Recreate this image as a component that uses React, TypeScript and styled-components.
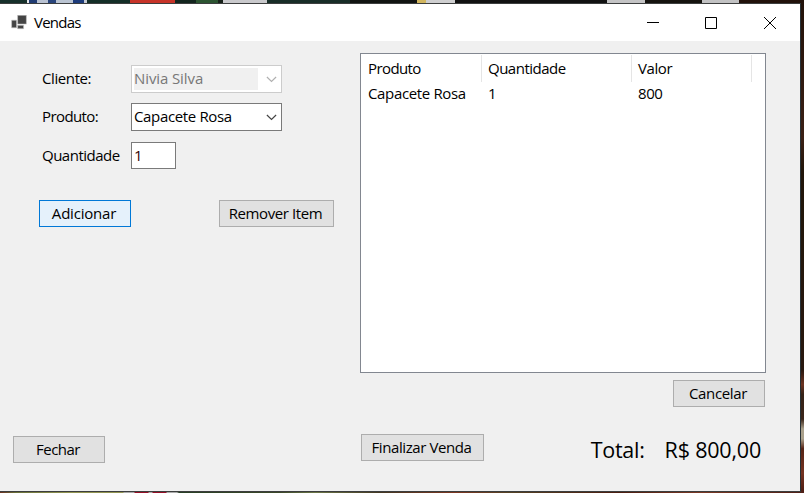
import React from "react";
import styled, { createGlobalStyle } from "styled-components";

const GlobalStyle = createGlobalStyle`
  * { box-sizing: border-box; }
  body { margin: 0; overflow: hidden; }
`;

const Desktop = styled.div`
  width: 804px;
  height: 493px;
  padding: 3px 3px 1px 0;
  overflow: hidden;
  font: 15px/20px "Open Sans", "Noto Sans", sans-serif;
  color: #000;
  white-space: nowrap;
  background:
    linear-gradient(90deg, #16302b 0 27px, #e6e6ea 27px 29px, #203b72 29px 37px, #b9c2d2 37px 48px, #29457c 48px 56px, #bac4d2 56px 73px, #1d3b7b 73px 84px, #c4c9d2 84px 87px, #142e28 87px 130px, #c73429 130px 175px, #12251e 175px 196px, #2c5431 196px 218px, #172019 218px 223px, #c9c9cc 223px 267px, #182d28 267px 350px, #111412 350px 417px, #d2b65f 417px 426px, #cfcfd0 426px 455px, #111 455px 607px, #c4c4c5 607px 645px, #15130f 645px 702px, #c2c2c3 702px 739px, #21110a 739px) 0 0 / 804px 3px no-repeat,
    linear-gradient(90deg, #6c3120, #697039 16px, #929452 70px, #929452 123px, #aaa 124px 134px, #940e25 135px 148px, #aaa 149px 152px, #940e25 153px 166px, #aaa 167px 177px, #283f25 179px, #3c4829 280px, #6b7546 315px, #443823 380px, #7c3520 455px, #554225 510px, #4b1d10 620px, #7a3824 700px, #4f2017) 0 491px / 804px 2px no-repeat,
    linear-gradient(#211109, #3b2015 28%, #201509 35%, #28180f 75%, #6c3321 78%, #352217 80%, #3b251a 85%, #aaa18c 87%, #aaa18c 89%, #562416 91%, #743321 96%, #4b1b11);
`;

const AppWindow = styled.main`
  width: 801px;
  height: 489px;
  border: solid #3c3e3e;
  border-width: 1px 1px 1px 0;
  border-right-color: #263036;
  background: #f0f0f0;
`;

const TitleBar = styled.header`
  display: flex;
  align-items: center;
  height: 37px;
  padding-left: 11px;
  background: #fff;
`;

const AppIcon = styled.svg`
  width: 16px;
  height: 16px;
  margin-right: 7px;
`;

const Label = styled.span<{ $track?: number }>`
  letter-spacing: ${(p) => p.$track ?? 0}px;
`;

const WindowTitle = styled(Label)`
  padding-bottom: 2px;
`;

const WindowControls = styled.div`
  display: flex;
  margin-left: auto;
`;

const ControlGlyph = styled.svg`
  width: 58px;
  height: 36px;
  fill: none;
  stroke: #000;
`;

const Body = styled.div`
  display: flex;
  height: 450px;
`;

const FormPanel = styled.section`
  display: flex;
  flex-direction: column;
  width: 360px;
  padding: 24px 26px 28px 13px;
`;

const Field = styled.div<{ $gap: number }>`
  display: grid;
  grid-template-columns: 89px auto;
  align-items: center;
  justify-content: start;
  margin-left: 29px;
  margin-bottom: ${(p) => p.$gap}px;

  > span {
    padding-bottom: 2px;
  }
`;

const Combo = styled.div<{ $disabled?: boolean }>`
  display: flex;
  align-items: center;
  width: 151px;
  height: 28px;
  padding: 2px;
  border: 1px solid ${(p) => (p.$disabled ? "#ccc" : "#7a7a7a")};
  background: #fff;
  color: ${(p) => (p.$disabled ? "#777" : "#000")};
`;

const ComboValue = styled.div<{ $disabled?: boolean }>`
  width: 124px;
  height: 22px;
  line-height: 20px;
  background: ${(p) => (p.$disabled ? "#f0f0f0" : "transparent")};
`;

const Chevron = styled.svg<{ $disabled?: boolean }>`
  width: 11px;
  height: 7px;
  margin-left: 8px;
  fill: none;
  stroke: ${(p) => (p.$disabled ? "#b0b0b0" : "#444")};
  stroke-width: 1.2;
`;

const QuantityBox = styled.div`
  width: 45px;
  height: 27px;
  padding: 2px;
  border: 1px solid #7a7a7a;
  background: #fff;
  color: #300;
  line-height: 20px;
`;

const FormActions = styled.div`
  display: flex;
  justify-content: space-between;
  margin-left: 26px;
`;

const Button = styled.button<{ $width?: number; $active?: boolean }>`
  display: flex;
  align-items: center;
  justify-content: center;
  width: ${(p) => p.$width ?? 92}px;
  height: 27px;
  padding: 0 2px 2px 0;
  border: 1px solid ${(p) => (p.$active ? "#0078d7" : "#adadad")};
  border-radius: 0;
  background: ${(p) => (p.$active ? "#e5f1fb" : "#e1e1e1")};
  color: #000;
  font: inherit;
`;

const FormFooter = styled.footer`
  margin-top: auto;
`;

const SalePanel = styled.section`
  display: flex;
  flex-direction: column;
  width: 406px;
  padding-top: 12px;
`;

const ListView = styled.div`
  height: 320px;
  padding: 1px 0 0 1px;
  border: 1px solid #828790;
  background: #fff;
`;

const ListRow = styled.div<{ $header?: boolean }>`
  display: grid;
  grid-template-columns: 120px 150px 120px;
  height: ${(p) => (p.$header ? 26 : 25)}px;
  line-height: ${(p) => (p.$header ? 27 : 25)}px;

  > span {
    padding-left: 6px;
    border-right: 1px solid ${(p) => (p.$header ? "#e5e5e5" : "transparent")};
  }
`;

const CancelRow = styled.div`
  display: flex;
  justify-content: flex-end;
  padding: 7px 1px 0 0;
`;

const Summary = styled.footer`
  display: flex;
  margin: 27px 0 0 1px;
`;

const Total = styled.div`
  display: flex;
  gap: 20px;
  margin-left: auto;
  padding: 2px 5px 0 0;
  font-size: 21.5px;
  line-height: 28px;
`;

const ComboBox = ({ value, track, disabled }: { value: string; track: number; disabled?: boolean }) => (
  <Combo $disabled={disabled}>
    <ComboValue $disabled={disabled}><Label $track={track}>{value}</Label></ComboValue>
    <Chevron $disabled={disabled} viewBox="0 0 11 7"><path d="M.9 1l4.6 4.5L10.1 1" /></Chevron>
  </Combo>
);

export default function App() {
  return (
    <Desktop>
      <GlobalStyle />
      <AppWindow>
        <TitleBar>
          <AppIcon viewBox="0 0 16 16" fill="#444" stroke="#c8c8c8" strokeWidth=".6">
            <path d="M.6 5.2h5v7.6h-5zM6.6 10.3h6v3.4h-6zM6.6.3h8.8v8.8H6.6z" />
          </AppIcon>
          <WindowTitle $track={-0.75}>Vendas</WindowTitle>
          <WindowControls>
            <ControlGlyph viewBox="0 0 58 36"><path d="M21 17.5h12" /></ControlGlyph>
            <ControlGlyph viewBox="0 0 58 36"><path d="M21.5 12.5h11v11h-11z" /></ControlGlyph>
            <ControlGlyph viewBox="0 0 58 36"><path d="M22 12l12 12M34 12L22 24" /></ControlGlyph>
          </WindowControls>
        </TitleBar>
        <Body>
          <FormPanel>
            <Field $gap={10}><Label $track={-0.4}>Cliente:</Label><ComboBox value="Nivia Silva" track={-0.1} disabled /></Field>
            <Field $gap={11}><Label $track={-0.6}>Produto:</Label><ComboBox value="Capacete Rosa" track={-0.35} /></Field>
            <Field $gap={31}><Label $track={-0.5}>Quantidade</Label><QuantityBox>1</QuantityBox></Field>
            <FormActions>
              <Button $active><Label $track={-0.2}>Adicionar</Label></Button>
              <Button $width={115}><Label $track={-0.4}>Remover Item</Label></Button>
            </FormActions>
            <FormFooter><Button><Label $track={-0.5}>Fechar</Label></Button></FormFooter>
          </FormPanel>
          <SalePanel>
            <ListView>
              <ListRow $header>
                <Label $track={-0.6}>Produto</Label><Label $track={-0.5}>Quantidade</Label><Label $track={-0.4}>Valor</Label>
              </ListRow>
              <ListRow>
                <Label $track={-0.35}>Capacete Rosa</Label><Label>1</Label><Label $track={-0.4}>800</Label>
              </ListRow>
            </ListView>
            <CancelRow><Button><Label $track={-0.35}>Cancelar</Label></Button></CancelRow>
            <Summary>
              <Button $width={123}><Label $track={-0.4}>Finalizar Venda</Label></Button>
              <Total><Label $track={-0.25}>Total:</Label><Label $track={-0.2}>R$ 800,00</Label></Total>
            </Summary>
          </SalePanel>
        </Body>
      </AppWindow>
    </Desktop>
  );
}
